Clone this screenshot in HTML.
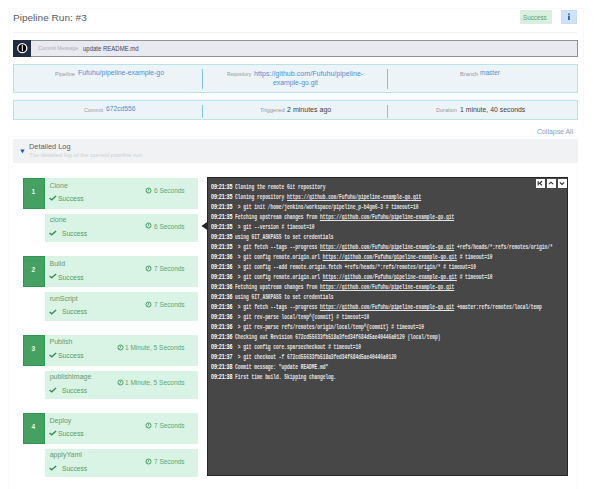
<!DOCTYPE html>
<html><head><meta charset="utf-8"><style>
*{margin:0;padding:0;box-sizing:border-box}
html,body{width:600px;height:489px;overflow:hidden;background:#fff}
body{position:relative;font-family:"Liberation Sans",sans-serif}
.t{position:absolute;white-space:nowrap;transform-origin:0 0}
.t u{text-decoration:underline;text-underline-offset:0.5px}
.ic{position:absolute}
.box{position:absolute}
.card{position:absolute;border:1px solid #fafafa}
.badge{left:520px;top:10.25px;width:32px;height:13.5px;background:#daf0df}
.info{left:561px;top:10.25px;width:16px;height:13.5px;background:#d0e2f7;border:1px solid #c6daf2}
.sep{left:13px;top:31.5px;width:564px;height:1px;background:#f0f0f0}
.cm{left:13px;top:40px;width:565px;height:16.5px;background:#e9e9f0;border:1px solid #8f939c;border-left:none}
.cmicon{left:13px;top:40px;width:18px;height:16.5px;background:#1f2c44}
.ibox{position:absolute;left:13px;width:565px;background:#edf4f7;border:1px solid #b9e3e8}
.vsep{position:absolute;width:1.2px;background:#80c8cc}
.dlh{left:12.5px;top:139px;width:565px;height:24px;background:#f1f2f4}
.stage{position:absolute;left:45px;width:153.3px;background:#d9f4e4}
.num{position:absolute;left:22.5px;width:22.5px;height:31px;background:#45a161;border:1px solid #2b9650}
.log{left:207px;top:177px;width:361px;height:298.6px;background:#474747;border:1px solid #262626}
.lb{position:absolute;top:179.2px;width:8.5px;height:8.6px;background:#fff}
</style></head><body>
<div class="card" style="left:8.5px;top:8px;width:575px;height:118px;border-bottom-color:transparent"></div>
<div class="box badge"></div>
<div class="box info"><svg width="14" height="12" style="position:absolute;left:0;top:0"><rect x="6.0" y="2.45" width="1.9" height="1.3" fill="#3466b8"/><rect x="6.0" y="4.65" width="1.9" height="4.4" fill="#3466b8"/></svg></div>
<div class="box sep"></div>
<div class="box cm"></div>
<div class="box cmicon"><svg width="18" height="17" style="position:absolute;left:0;top:0"><circle cx="9.3" cy="8.2" r="4.5" fill="#000" stroke="#fff" stroke-width="1.3"/><rect x="8.8" y="5" width="1" height="6.2" fill="#fff"/></svg></div>
<div class="ibox" style="top:63.6px;height:29px"><div class="vsep" style="left:187.6px;top:4.5px;height:19.5px"></div><div class="vsep" style="left:372.8px;top:4.5px;height:19.5px"></div></div>
<div class="ibox" style="top:99.5px;height:20px"><div class="vsep" style="left:187.6px;top:4px;height:13px"></div><div class="vsep" style="left:372.8px;top:4px;height:13px"></div></div>
<div class="card" style="left:8px;top:136px;width:570px;height:360px"></div>
<div class="box dlh"></div>
<svg class="ic" style="left:19.5px;top:148.5px" width="5" height="5" viewBox="0 0 5 5"><path d="M0.4 0.6 L4.6 0.6 L2.5 4.4 Z" fill="#1d52d4"/></svg>
<div class="num" style="top:178.00px"></div>
<div class="stage" style="top:178.00px;height:31px"></div>
<div class="stage" style="top:213.75px;height:28.5px"></div>
<svg class="ic" style="left:49px;top:194.90px" width="8" height="6" viewBox="0 0 8 6"><path d="M0.6 3.0 L2.7 4.8 L7.1 0.9" fill="none" stroke="#3a8c56" stroke-width="1.4"/></svg>
<svg class="ic" style="left:145.10px;top:187.00px" width="7" height="7" viewBox="0 0 7 7"><circle cx="3.5" cy="3.5" r="2.5" fill="none" stroke="#4a9864" stroke-width="1"/><path d="M3.5 2.0 V3.7 L2.4 4.3" fill="none" stroke="#4a9864" stroke-width="0.8"/></svg>
<svg class="ic" style="left:49px;top:230.15px" width="8" height="6" viewBox="0 0 8 6"><path d="M0.6 3.0 L2.7 4.8 L7.1 0.9" fill="none" stroke="#3a8c56" stroke-width="1.4"/></svg>
<svg class="ic" style="left:145.10px;top:222.35px" width="7" height="7" viewBox="0 0 7 7"><circle cx="3.5" cy="3.5" r="2.5" fill="none" stroke="#4a9864" stroke-width="1"/><path d="M3.5 2.0 V3.7 L2.4 4.3" fill="none" stroke="#4a9864" stroke-width="0.8"/></svg>
<div class="num" style="top:256.40px"></div>
<div class="stage" style="top:256.40px;height:31px"></div>
<div class="stage" style="top:292.15px;height:28.5px"></div>
<svg class="ic" style="left:49px;top:273.30px" width="8" height="6" viewBox="0 0 8 6"><path d="M0.6 3.0 L2.7 4.8 L7.1 0.9" fill="none" stroke="#3a8c56" stroke-width="1.4"/></svg>
<svg class="ic" style="left:145.10px;top:265.40px" width="7" height="7" viewBox="0 0 7 7"><circle cx="3.5" cy="3.5" r="2.5" fill="none" stroke="#4a9864" stroke-width="1"/><path d="M3.5 2.0 V3.7 L2.4 4.3" fill="none" stroke="#4a9864" stroke-width="0.8"/></svg>
<svg class="ic" style="left:49px;top:308.55px" width="8" height="6" viewBox="0 0 8 6"><path d="M0.6 3.0 L2.7 4.8 L7.1 0.9" fill="none" stroke="#3a8c56" stroke-width="1.4"/></svg>
<svg class="ic" style="left:145.10px;top:300.75px" width="7" height="7" viewBox="0 0 7 7"><circle cx="3.5" cy="3.5" r="2.5" fill="none" stroke="#4a9864" stroke-width="1"/><path d="M3.5 2.0 V3.7 L2.4 4.3" fill="none" stroke="#4a9864" stroke-width="0.8"/></svg>
<div class="num" style="top:334.80px"></div>
<div class="stage" style="top:334.80px;height:31px"></div>
<div class="stage" style="top:370.55px;height:28.5px"></div>
<svg class="ic" style="left:49px;top:351.70px" width="8" height="6" viewBox="0 0 8 6"><path d="M0.6 3.0 L2.7 4.8 L7.1 0.9" fill="none" stroke="#3a8c56" stroke-width="1.4"/></svg>
<svg class="ic" style="left:117.10px;top:343.80px" width="7" height="7" viewBox="0 0 7 7"><circle cx="3.5" cy="3.5" r="2.5" fill="none" stroke="#4a9864" stroke-width="1"/><path d="M3.5 2.0 V3.7 L2.4 4.3" fill="none" stroke="#4a9864" stroke-width="0.8"/></svg>
<svg class="ic" style="left:49px;top:386.95px" width="8" height="6" viewBox="0 0 8 6"><path d="M0.6 3.0 L2.7 4.8 L7.1 0.9" fill="none" stroke="#3a8c56" stroke-width="1.4"/></svg>
<svg class="ic" style="left:117.10px;top:379.15px" width="7" height="7" viewBox="0 0 7 7"><circle cx="3.5" cy="3.5" r="2.5" fill="none" stroke="#4a9864" stroke-width="1"/><path d="M3.5 2.0 V3.7 L2.4 4.3" fill="none" stroke="#4a9864" stroke-width="0.8"/></svg>
<div class="num" style="top:413.20px"></div>
<div class="stage" style="top:413.20px;height:31px"></div>
<div class="stage" style="top:448.95px;height:28.5px"></div>
<svg class="ic" style="left:49px;top:430.10px" width="8" height="6" viewBox="0 0 8 6"><path d="M0.6 3.0 L2.7 4.8 L7.1 0.9" fill="none" stroke="#3a8c56" stroke-width="1.4"/></svg>
<svg class="ic" style="left:145.10px;top:422.20px" width="7" height="7" viewBox="0 0 7 7"><circle cx="3.5" cy="3.5" r="2.5" fill="none" stroke="#4a9864" stroke-width="1"/><path d="M3.5 2.0 V3.7 L2.4 4.3" fill="none" stroke="#4a9864" stroke-width="0.8"/></svg>
<svg class="ic" style="left:49px;top:465.35px" width="8" height="6" viewBox="0 0 8 6"><path d="M0.6 3.0 L2.7 4.8 L7.1 0.9" fill="none" stroke="#3a8c56" stroke-width="1.4"/></svg>
<svg class="ic" style="left:145.10px;top:457.55px" width="7" height="7" viewBox="0 0 7 7"><circle cx="3.5" cy="3.5" r="2.5" fill="none" stroke="#4a9864" stroke-width="1"/><path d="M3.5 2.0 V3.7 L2.4 4.3" fill="none" stroke="#4a9864" stroke-width="0.8"/></svg>
<div class="box log"></div>
<svg class="ic" style="left:200.5px;top:220.8px" width="7.5" height="10" viewBox="0 0 7.5 10"><path d="M7.5 0 L0.4 4.9 L7.5 9.8 Z" fill="#262626"/></svg>
<div class="lb" style="left:536.1px"><svg width="8" height="8" style="position:absolute;left:0;top:0"><path d="M2.2 2.2 V6.4 M6.1 2.2 L3.6 4.3 L6.1 6.4" fill="none" stroke="#2a2a2a" stroke-width="1.15"/></svg></div>
<div class="lb" style="left:547.3px"><svg width="8" height="8" style="position:absolute;left:0;top:0"><path d="M1.9 5.2 L4.0 3.2 L6.1 5.2" fill="none" stroke="#2a2a2a" stroke-width="1.15"/></svg></div>
<div class="lb" style="left:558.2px"><svg width="8" height="8" style="position:absolute;left:0;top:0"><path d="M1.9 3.4 L4.0 5.4 L6.1 3.4" fill="none" stroke="#2a2a2a" stroke-width="1.15"/></svg></div>
<div class="t" id="title" style="left:12.90px;top:13.60px;font-size:8.5px;line-height:8.5px;color:#575b63;font-weight:normal;transform:scaleX(1.1829);">Pipeline Run: #3</div>
<div class="t" id="badge" style="left:523.40px;top:14.51px;font-size:6.6px;line-height:6.6px;color:#5c9f6d;font-weight:normal;transform:scaleX(0.9510);">Success</div>
<div class="t" id="cmlbl" style="left:37.75px;top:46.26px;font-size:5.6px;line-height:5.6px;color:#acaeb5;font-weight:normal;transform:scaleX(0.9269);">Commit Message</div>
<div class="t" id="cmval" style="left:83.00px;top:45.51px;font-size:6.6px;line-height:6.6px;color:#45474f;font-weight:normal;transform:scaleX(0.9101);">update README.md</div>
<div class="t" id="pl" style="left:55.00px;top:70.62px;font-size:6.0px;line-height:6.0px;color:#96999f;font-weight:normal;transform:scaleX(0.9364);">Pipeline</div>
<div class="t" id="pv" style="left:78.00px;top:70.37px;font-size:6.3px;line-height:6.3px;color:#4d8fd6;font-weight:normal;transform:scaleX(1.1017);">Fufuhu/pipeline-example-go</div>
<div class="t" id="rl" style="left:227.00px;top:70.97px;font-size:6.0px;line-height:6.0px;color:#96999f;font-weight:normal;transform:scaleX(0.8453);">Repository</div>
<div class="t" id="rv" style="left:253.75px;top:70.72px;font-size:6.3px;line-height:6.3px;color:#4d8fd6;font-weight:normal;transform:scaleX(1.1308);">https://github.com/Fufuhu/pipeline-</div>
<div class="t" id="rv2" style="left:272.50px;top:80.22px;font-size:6.3px;line-height:6.3px;color:#4d8fd6;font-weight:normal;transform:scaleX(1.0893);">example-go.git</div>
<div class="t" id="bl" style="left:460.00px;top:70.52px;font-size:6.0px;line-height:6.0px;color:#96999f;font-weight:normal;transform:scaleX(0.9466);">Branch</div>
<div class="t" id="bv" style="left:480.00px;top:70.27px;font-size:6.3px;line-height:6.3px;color:#4d8fd6;font-weight:normal;transform:scaleX(1.0390);">master</div>
<div class="t" id="cl" style="left:84.10px;top:106.52px;font-size:6.0px;line-height:6.0px;color:#96999f;font-weight:normal;transform:scaleX(0.9191);">Commit</div>
<div class="t" id="cv" style="left:105.90px;top:106.27px;font-size:6.3px;line-height:6.3px;color:#4d8fd6;font-weight:normal;transform:scaleX(1.0661);">672cd556</div>
<div class="t" id="tl" style="left:259.70px;top:106.92px;font-size:6.0px;line-height:6.0px;color:#96999f;font-weight:normal;transform:scaleX(0.9737);">Triggered</div>
<div class="t" id="tv" style="left:286.70px;top:106.67px;font-size:6.3px;line-height:6.3px;color:#3d3f45;font-weight:normal;transform:scaleX(1.1197);">2 minutes ago</div>
<div class="t" id="dl" style="left:435.80px;top:106.92px;font-size:6.0px;line-height:6.0px;color:#96999f;font-weight:normal;transform:scaleX(0.9212);">Duration</div>
<div class="t" id="dv" style="left:459.70px;top:106.67px;font-size:6.3px;line-height:6.3px;color:#3d3f45;font-weight:normal;transform:scaleX(1.0909);">1 minute, 40 seconds</div>
<div class="t" id="coll" style="left:536.90px;top:129.40px;font-size:6.5px;line-height:6.5px;color:#82a2c6;font-weight:normal;transform:scaleX(1.0657);">Collapse All</div>
<div class="t" id="dlt" style="left:29.00px;top:143.21px;font-size:7.2px;line-height:7.2px;color:#5a5d63;font-weight:normal;transform:scaleX(1.0279);">Detailed Log</div>
<div class="t" id="dls" style="left:29.00px;top:152.96px;font-size:5.6px;line-height:5.6px;color:#cdcfd3;font-weight:normal;transform:scaleX(1.0783);">The detailed log of the current pipeline run</div>
<div class="t" id="n0" style="left:31.60px;top:188.70px;font-size:6.5px;line-height:6.5px;color:#eef8f1;font-weight:bold;">1</div>
<div class="t" id="sn0" style="left:49.50px;top:181.62px;font-size:7px;line-height:7px;color:#62997a;font-weight:normal;">Clone</div>
<div class="t" id="ss0" style="left:58.30px;top:195.17px;font-size:7px;line-height:7px;color:#4f9b66;font-weight:normal;transform:scaleX(0.9710);">Success</div>
<div class="t" id="sd0" style="left:153.70px;top:187.80px;font-size:6.5px;line-height:6.5px;color:#58a872;font-weight:normal;transform:scaleX(0.9961);">6 Seconds</div>
<div class="t" id="bn0" style="left:49.70px;top:216.12px;font-size:7px;line-height:7px;color:#62997a;font-weight:normal;">clone</div>
<div class="t" id="bs0" style="left:61.90px;top:229.82px;font-size:7px;line-height:7px;color:#4f9b66;font-weight:normal;transform:scaleX(0.9445);">Success</div>
<div class="t" id="bd0" style="left:153.70px;top:223.65px;font-size:6.5px;line-height:6.5px;color:#58a872;font-weight:normal;transform:scaleX(0.9961);">6 Seconds</div>
<div class="t" id="n1" style="left:31.60px;top:267.10px;font-size:6.5px;line-height:6.5px;color:#eef8f1;font-weight:bold;">2</div>
<div class="t" id="sn1" style="left:49.50px;top:260.02px;font-size:7px;line-height:7px;color:#62997a;font-weight:normal;">Build</div>
<div class="t" id="ss1" style="left:58.30px;top:273.57px;font-size:7px;line-height:7px;color:#4f9b66;font-weight:normal;transform:scaleX(0.9710);">Success</div>
<div class="t" id="sd1" style="left:153.70px;top:266.20px;font-size:6.5px;line-height:6.5px;color:#58a872;font-weight:normal;transform:scaleX(0.9961);">7 Seconds</div>
<div class="t" id="bn1" style="left:49.70px;top:294.52px;font-size:7px;line-height:7px;color:#62997a;font-weight:normal;">runScript</div>
<div class="t" id="bs1" style="left:61.90px;top:308.22px;font-size:7px;line-height:7px;color:#4f9b66;font-weight:normal;transform:scaleX(0.9445);">Success</div>
<div class="t" id="bd1" style="left:153.70px;top:302.05px;font-size:6.5px;line-height:6.5px;color:#58a872;font-weight:normal;transform:scaleX(0.9961);">7 Seconds</div>
<div class="t" id="n2" style="left:31.60px;top:345.50px;font-size:6.5px;line-height:6.5px;color:#eef8f1;font-weight:bold;">3</div>
<div class="t" id="sn2" style="left:49.50px;top:338.42px;font-size:7px;line-height:7px;color:#62997a;font-weight:normal;">Publish</div>
<div class="t" id="ss2" style="left:58.30px;top:351.97px;font-size:7px;line-height:7px;color:#4f9b66;font-weight:normal;transform:scaleX(0.9710);">Success</div>
<div class="t" id="sd2" style="left:124.90px;top:344.60px;font-size:6.5px;line-height:6.5px;color:#58a872;font-weight:normal;transform:scaleX(1.0023);">1 Minute, 5 Seconds</div>
<div class="t" id="bn2" style="left:49.70px;top:372.92px;font-size:7px;line-height:7px;color:#62997a;font-weight:normal;">publishImage</div>
<div class="t" id="bs2" style="left:61.90px;top:386.62px;font-size:7px;line-height:7px;color:#4f9b66;font-weight:normal;transform:scaleX(0.9445);">Success</div>
<div class="t" id="bd2" style="left:124.90px;top:380.45px;font-size:6.5px;line-height:6.5px;color:#58a872;font-weight:normal;transform:scaleX(1.0023);">1 Minute, 5 Seconds</div>
<div class="t" id="n3" style="left:31.60px;top:423.90px;font-size:6.5px;line-height:6.5px;color:#eef8f1;font-weight:bold;">4</div>
<div class="t" id="sn3" style="left:49.50px;top:416.82px;font-size:7px;line-height:7px;color:#62997a;font-weight:normal;">Deploy</div>
<div class="t" id="ss3" style="left:58.30px;top:430.37px;font-size:7px;line-height:7px;color:#4f9b66;font-weight:normal;transform:scaleX(0.9710);">Success</div>
<div class="t" id="sd3" style="left:153.70px;top:423.00px;font-size:6.5px;line-height:6.5px;color:#58a872;font-weight:normal;transform:scaleX(0.9961);">7 Seconds</div>
<div class="t" id="bn3" style="left:49.70px;top:451.32px;font-size:7px;line-height:7px;color:#62997a;font-weight:normal;">applyYaml</div>
<div class="t" id="bs3" style="left:61.90px;top:465.02px;font-size:7px;line-height:7px;color:#4f9b66;font-weight:normal;transform:scaleX(0.9445);">Success</div>
<div class="t" id="bd3" style="left:153.70px;top:458.85px;font-size:6.5px;line-height:6.5px;color:#58a872;font-weight:normal;transform:scaleX(0.9961);">7 Seconds</div>
<div class="t" id="ts0" style="left:211.00px;top:184.47px;font-size:6.3px;line-height:6.3px;color:#ffffff;font-weight:bold;transform:scaleX(0.8525);">09:21:35</div>
<div class="t" id="m0" style="left:235.00px;top:185.27px;font-size:6.3px;line-height:6.3px;color:#e4e4e4;font-weight:bold;font-family:'Liberation Mono',monospace;transform:scaleX(0.7249);white-space:pre;">Cloning the remote Git repository</div>
<div class="t" id="ts1" style="left:211.00px;top:194.47px;font-size:6.3px;line-height:6.3px;color:#ffffff;font-weight:bold;transform:scaleX(0.8525);">09:21:35</div>
<div class="t" id="m1" style="left:235.00px;top:195.27px;font-size:6.3px;line-height:6.3px;color:#e4e4e4;font-weight:bold;font-family:'Liberation Mono',monospace;transform:scaleX(0.7249);white-space:pre;">Cloning repository <u>https://github.com/Fufuhu/pipeline-example-go.git</u></div>
<div class="t" id="ts2" style="left:211.00px;top:204.47px;font-size:6.3px;line-height:6.3px;color:#ffffff;font-weight:bold;transform:scaleX(0.8525);">09:21:35</div>
<div class="t" id="m2" style="left:235.00px;top:205.27px;font-size:6.3px;line-height:6.3px;color:#e4e4e4;font-weight:bold;font-family:'Liberation Mono',monospace;transform:scaleX(0.7249);white-space:pre;"> &gt; git init /home/jenkins/workspace/pipeline_p-b4gm6-3 # timeout=10</div>
<div class="t" id="ts3" style="left:211.00px;top:214.47px;font-size:6.3px;line-height:6.3px;color:#ffffff;font-weight:bold;transform:scaleX(0.8525);">09:21:35</div>
<div class="t" id="m3" style="left:235.00px;top:215.27px;font-size:6.3px;line-height:6.3px;color:#e4e4e4;font-weight:bold;font-family:'Liberation Mono',monospace;transform:scaleX(0.7249);white-space:pre;">Fetching upstream changes from <u>https://github.com/Fufuhu/pipeline-example-go.git</u></div>
<div class="t" id="ts4" style="left:211.00px;top:224.47px;font-size:6.3px;line-height:6.3px;color:#ffffff;font-weight:bold;transform:scaleX(0.8525);">09:21:35</div>
<div class="t" id="m4" style="left:235.00px;top:225.27px;font-size:6.3px;line-height:6.3px;color:#e4e4e4;font-weight:bold;font-family:'Liberation Mono',monospace;transform:scaleX(0.7249);white-space:pre;"> &gt; git --version # timeout=10</div>
<div class="t" id="ts5" style="left:211.00px;top:234.47px;font-size:6.3px;line-height:6.3px;color:#ffffff;font-weight:bold;transform:scaleX(0.8525);">09:21:35</div>
<div class="t" id="m5" style="left:235.00px;top:235.27px;font-size:6.3px;line-height:6.3px;color:#e4e4e4;font-weight:bold;font-family:'Liberation Mono',monospace;transform:scaleX(0.7249);white-space:pre;">using GIT_ASKPASS to set credentials</div>
<div class="t" id="ts6" style="left:211.00px;top:244.47px;font-size:6.3px;line-height:6.3px;color:#ffffff;font-weight:bold;transform:scaleX(0.8525);">09:21:35</div>
<div class="t" id="m6" style="left:235.00px;top:245.27px;font-size:6.3px;line-height:6.3px;color:#e4e4e4;font-weight:bold;font-family:'Liberation Mono',monospace;transform:scaleX(0.7249);white-space:pre;"> &gt; git fetch --tags --progress <u>https://github.com/Fufuhu/pipeline-example-go.git</u> +refs/heads/*:refs/remotes/origin/*</div>
<div class="t" id="ts7" style="left:211.00px;top:254.47px;font-size:6.3px;line-height:6.3px;color:#ffffff;font-weight:bold;transform:scaleX(0.8525);">09:21:36</div>
<div class="t" id="m7" style="left:235.00px;top:255.27px;font-size:6.3px;line-height:6.3px;color:#e4e4e4;font-weight:bold;font-family:'Liberation Mono',monospace;transform:scaleX(0.7249);white-space:pre;"> &gt; git config remote.origin.url <u>https://github.com/Fufuhu/pipeline-example-go.git</u> # timeout=10</div>
<div class="t" id="ts8" style="left:211.00px;top:264.47px;font-size:6.3px;line-height:6.3px;color:#ffffff;font-weight:bold;transform:scaleX(0.8525);">09:21:36</div>
<div class="t" id="m8" style="left:235.00px;top:265.27px;font-size:6.3px;line-height:6.3px;color:#e4e4e4;font-weight:bold;font-family:'Liberation Mono',monospace;transform:scaleX(0.7249);white-space:pre;"> &gt; git config --add remote.origin.fetch +refs/heads/*:refs/remotes/origin/* # timeout=10</div>
<div class="t" id="ts9" style="left:211.00px;top:274.47px;font-size:6.3px;line-height:6.3px;color:#ffffff;font-weight:bold;transform:scaleX(0.8525);">09:21:36</div>
<div class="t" id="m9" style="left:235.00px;top:275.27px;font-size:6.3px;line-height:6.3px;color:#e4e4e4;font-weight:bold;font-family:'Liberation Mono',monospace;transform:scaleX(0.7249);white-space:pre;"> &gt; git config remote.origin.url <u>https://github.com/Fufuhu/pipeline-example-go.git</u> # timeout=10</div>
<div class="t" id="ts10" style="left:211.00px;top:284.47px;font-size:6.3px;line-height:6.3px;color:#ffffff;font-weight:bold;transform:scaleX(0.8525);">09:21:36</div>
<div class="t" id="m10" style="left:235.00px;top:285.27px;font-size:6.3px;line-height:6.3px;color:#e4e4e4;font-weight:bold;font-family:'Liberation Mono',monospace;transform:scaleX(0.7249);white-space:pre;">Fetching upstream changes from <u>https://github.com/Fufuhu/pipeline-example-go.git</u></div>
<div class="t" id="ts11" style="left:211.00px;top:294.47px;font-size:6.3px;line-height:6.3px;color:#ffffff;font-weight:bold;transform:scaleX(0.8525);">09:21:36</div>
<div class="t" id="m11" style="left:235.00px;top:295.27px;font-size:6.3px;line-height:6.3px;color:#e4e4e4;font-weight:bold;font-family:'Liberation Mono',monospace;transform:scaleX(0.7249);white-space:pre;">using GIT_ASKPASS to set credentials</div>
<div class="t" id="ts12" style="left:211.00px;top:304.47px;font-size:6.3px;line-height:6.3px;color:#ffffff;font-weight:bold;transform:scaleX(0.8525);">09:21:36</div>
<div class="t" id="m12" style="left:235.00px;top:305.27px;font-size:6.3px;line-height:6.3px;color:#e4e4e4;font-weight:bold;font-family:'Liberation Mono',monospace;transform:scaleX(0.7249);white-space:pre;"> &gt; git fetch --tags --progress <u>https://github.com/Fufuhu/pipeline-example-go.git</u> +master:refs/remotes/local/temp</div>
<div class="t" id="ts13" style="left:211.00px;top:314.47px;font-size:6.3px;line-height:6.3px;color:#ffffff;font-weight:bold;transform:scaleX(0.8525);">09:21:36</div>
<div class="t" id="m13" style="left:235.00px;top:315.27px;font-size:6.3px;line-height:6.3px;color:#e4e4e4;font-weight:bold;font-family:'Liberation Mono',monospace;transform:scaleX(0.7249);white-space:pre;"> &gt; git rev-parse local/temp^{commit} # timeout=10</div>
<div class="t" id="ts14" style="left:211.00px;top:324.47px;font-size:6.3px;line-height:6.3px;color:#ffffff;font-weight:bold;transform:scaleX(0.8525);">09:21:36</div>
<div class="t" id="m14" style="left:235.00px;top:325.27px;font-size:6.3px;line-height:6.3px;color:#e4e4e4;font-weight:bold;font-family:'Liberation Mono',monospace;transform:scaleX(0.7249);white-space:pre;"> &gt; git rev-parse refs/remotes/origin/local/temp^{commit} # timeout=10</div>
<div class="t" id="ts15" style="left:211.00px;top:334.47px;font-size:6.3px;line-height:6.3px;color:#ffffff;font-weight:bold;transform:scaleX(0.8525);">09:21:36</div>
<div class="t" id="m15" style="left:235.00px;top:335.27px;font-size:6.3px;line-height:6.3px;color:#e4e4e4;font-weight:bold;font-family:'Liberation Mono',monospace;transform:scaleX(0.7249);white-space:pre;">Checking out Revision 672cd55633fb518a3fed34f684d5ae40446a0120 (local/temp)</div>
<div class="t" id="ts16" style="left:211.00px;top:344.47px;font-size:6.3px;line-height:6.3px;color:#ffffff;font-weight:bold;transform:scaleX(0.8525);">09:21:36</div>
<div class="t" id="m16" style="left:235.00px;top:345.27px;font-size:6.3px;line-height:6.3px;color:#e4e4e4;font-weight:bold;font-family:'Liberation Mono',monospace;transform:scaleX(0.7249);white-space:pre;"> &gt; git config core.sparsecheckout # timeout=10</div>
<div class="t" id="ts17" style="left:211.00px;top:354.47px;font-size:6.3px;line-height:6.3px;color:#ffffff;font-weight:bold;transform:scaleX(0.8525);">09:21:37</div>
<div class="t" id="m17" style="left:235.00px;top:355.27px;font-size:6.3px;line-height:6.3px;color:#e4e4e4;font-weight:bold;font-family:'Liberation Mono',monospace;transform:scaleX(0.7249);white-space:pre;"> &gt; git checkout -f 672cd55633fb518a3fed34f684d5ae40446a0120</div>
<div class="t" id="ts18" style="left:211.00px;top:364.47px;font-size:6.3px;line-height:6.3px;color:#ffffff;font-weight:bold;transform:scaleX(0.8525);">09:21:38</div>
<div class="t" id="m18" style="left:235.00px;top:365.27px;font-size:6.3px;line-height:6.3px;color:#e4e4e4;font-weight:bold;font-family:'Liberation Mono',monospace;transform:scaleX(0.7249);white-space:pre;">Commit message: "update README.md"</div>
<div class="t" id="ts19" style="left:211.00px;top:374.47px;font-size:6.3px;line-height:6.3px;color:#ffffff;font-weight:bold;transform:scaleX(0.8525);">09:21:38</div>
<div class="t" id="m19" style="left:235.00px;top:375.27px;font-size:6.3px;line-height:6.3px;color:#e4e4e4;font-weight:bold;font-family:'Liberation Mono',monospace;transform:scaleX(0.7249);white-space:pre;">First time build. Skipping changelog.</div>
</body></html>
